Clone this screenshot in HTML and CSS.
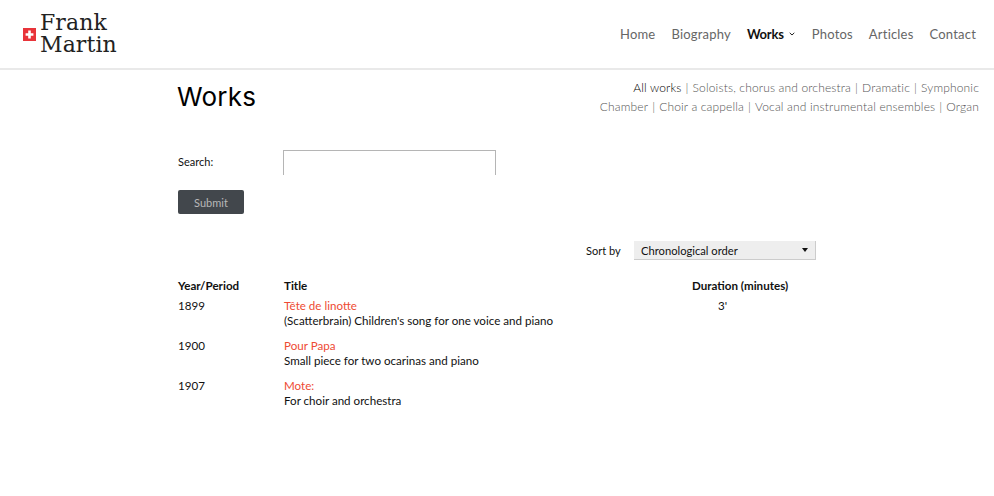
FILE: index.html
```html
<!DOCTYPE html>
<html lang="en">
<head>
<meta charset="utf-8">
<title>Works - Frank Martin</title>
<link rel="stylesheet" href="styles.css">
</head>
<body>
<header class="site-header">
  <a class="logo" href="#">
    <svg class="flag" width="13" height="13" viewBox="0 0 13 13"><rect width="13" height="13" fill="#e8343a"/><path d="M5.2 2.6h2.6v2.6h2.6v2.6H7.8v2.6H5.2V7.8H2.6V5.2h2.6z" fill="#fff"/></svg>
    <span class="logo-text">Frank<br>Martin</span>
  </a>
  <nav class="main-nav">
    <a href="#">Home</a>
    <a href="#">Biography</a>
    <a href="#" class="active">Works<svg class="caret" width="6" height="4" viewBox="0 0 6 4"><path d="M.7.8 3 3 5.3.8" fill="none" stroke="#222" stroke-width="1"/></svg></a>
    <a href="#">Photos</a>
    <a href="#">Articles</a>
    <a href="#">Contact</a>
  </nav>
</header>
<main class="content">
  <div class="title-row">
    <h1>Works</h1>
    <div class="filters">
      <div><a class="current" href="#">All works</a><i>|</i><a href="#">Soloists, chorus and orchestra</a><i>|</i><a href="#">Dramatic</a><i>|</i><a href="#">Symphonic</a></div>
      <div><a href="#">Chamber</a><i>|</i><a href="#">Choir a cappella</a><i>|</i><a href="#">Vocal and instrumental ensembles</a><i>|</i><a href="#">Organ</a></div>
    </div>
  </div>
  <form class="search">
    <div class="search-row">
      <label for="q">Search:</label>
      <div class="input"></div>
    </div>
    <button type="button" class="submit">Submit</button>
  </form>
  <div class="sort">
    <span>Sort by</span>
    <div class="select">Chronological order<i class="arrow"></i></div>
  </div>
  <div class="works">
    <div class="row head"><div>Year/Period</div><div>Title</div><div class="dur">Duration (minutes)</div></div>
    <div class="row"><div>1899</div><div><a href="#">Tête de linotte</a><p>(Scatterbrain) Children's song for one voice and piano</p></div><div class="dur"><span class="mins">3'</span></div></div>
    <div class="row"><div>1900</div><div><a href="#">Pour Papa</a><p>Small piece for two ocarinas and piano</p></div><div class="dur"></div></div>
    <div class="row"><div>1907</div><div><a href="#">Mote:</a><p>For choir and orchestra</p></div><div class="dur"></div></div>
  </div>
</main>
</body>
</html>
```
FILE: styles.css
```css
* { box-sizing: border-box; }
html, body { margin: 0; padding: 0; background: #fff; }
body { font-family: "Lato", "Liberation Sans", sans-serif; color: #222; overflow: hidden; height: 496px; }
a { text-decoration: none; color: inherit; }

.site-header { height: 70px; border-bottom: 2px solid #e9e9e9; display: flex; justify-content: space-between; align-items: center; padding: 0 18px 0 23px; }
.logo { display: flex; align-items: center; gap: 4px; color: #222; }
.flag { display: block; margin-top: 1px; }
.logo-text { font-family: "DejaVu Serif", serif; font-size: 22px; line-height: 22px; letter-spacing: .1px; }
.main-nav { display: flex; gap: 16px; font-size: 13px; color: #666; letter-spacing: .2px; }
.main-nav .active { color: #111; font-weight: 700; display: flex; align-items: center; gap: 5px; letter-spacing: -.2px; margin-right: 1px; }

.content { padding-left: 177px; padding-right: 15px; }
.title-row { display: flex; justify-content: space-between; padding-top: 8px; }
h1 { margin: 4px 0 0; font-family: "Inter", sans-serif; font-weight: 400; font-size: 26px; line-height: 30px; color: #000; letter-spacing: .2px; }
.filters { text-align: right; font-size: 12px; font-weight: 300; line-height: 19px; color: #555; letter-spacing: .15px; }
.filters .current { color: #000; }
.filters i { font-style: normal; margin: 0 4px; }

.search { margin-top: 34px; font-size: 11px; color: #111; }
.search-row { display: flex; align-items: flex-start; }
.search-row label { width: 106px; padding-top: 5px; padding-left: 1px; }
.input { width: 213px; height: 25px; border: 1px solid #b5b5b5; border-bottom: 0; }
.submit { display: block; margin: 15px 0 0 1px; width: 66px; height: 24px; border: 0; border-radius: 2px; background: #42474c; color: #b8b8b8; font: 11px "Lato", sans-serif; }

.sort { display: flex; align-items: center; margin: 27px 0 0 409px; font-size: 11px; color: #111; }
.sort span { width: 48px; }
.select { position: relative; width: 182px; height: 19px; line-height: 19px; padding-left: 7px; background: #eee; border-bottom: 1px solid #ccc; border-right: 1px solid #ccc; font-size: 11.2px; }
.arrow { position: absolute; right: 7px; top: 7px; border: 3.5px solid transparent; border-top: 4px solid #111; border-bottom: 0; }

.works { margin-top: 18px; font-size: 11.6px; color: #111; }
.row { display: grid; grid-template-columns: 106px 408px 110px; padding-left: 1px; margin-bottom: 10px; line-height: 15px; }
.row.head { font-weight: 700; margin-bottom: 5px; }
.row a { color: #ee4a33; }
.row p { margin: 0; }
.mins { padding-left: 26px; }
```
